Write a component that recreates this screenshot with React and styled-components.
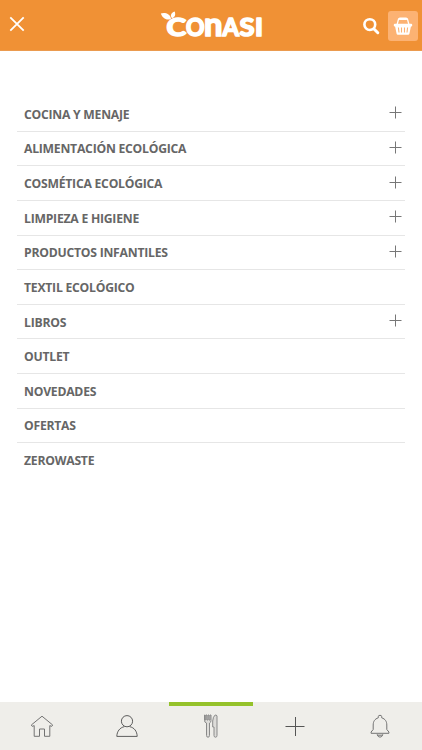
import React from 'react';
import styled, { createGlobalStyle } from 'styled-components';

const GlobalStyle = createGlobalStyle`
  body {
    margin: 0;
    background: #fff;
    font-family: 'Open Sans', 'Noto Sans', sans-serif;
  }
`;

const Page = styled.div`
  display: flex;
  flex-direction: column;
  height: 750px;
  overflow: hidden;
`;

const Header = styled.header`
  display: grid;
  grid-template-columns: 160px 104px 1fr;
  align-items: center;
  box-sizing: border-box;
  height: 51px;
  background: #f09135;
  border-bottom: 1px solid #eb9b4f;
`;

const IconButton = styled.button`
  display: flex;
  align-items: center;
  justify-content: center;
  width: ${(props) => props.$width || 30}px;
  height: 30px;
  padding: 0;
  border: none;
  border-radius: 3px;
  background: ${(props) => (props.$filled ? '#fcb273' : 'transparent')};
  cursor: pointer;
`;

const CloseButton = styled(IconButton)`
  margin: 0 0 2px 2px;
`;

const Actions = styled.div`
  display: flex;
  justify-content: flex-end;
  gap: 2px;
  padding: 1px 4px 0 0;
`;

const LogoText = styled.text`
  font-family: Lato, sans-serif;
  font-weight: 700;
  fill: #fff;
  stroke: #fff;
  stroke-width: 1.7;
  stroke-linejoin: round;
`;

const Menu = styled.ul`
  flex: 1;
  margin: 0;
  padding: 46px 17px 0;
  list-style: none;
`;

const MenuItem = styled.li`
  display: flex;
  align-items: center;
  justify-content: space-between;
  box-sizing: border-box;
  height: 34.64px;
  padding: 2px 3px 0 7px;
  border-bottom: 1px solid #e6e6e6;
  color: #666;
  font-size: 12.2px;
  font-weight: 700;
  letter-spacing: -0.24px;
  line-height: 18px;

  &:last-child {
    border-bottom: none;
    padding-top: 1px;
  }
`;

const PlusIcon = styled.svg`
  margin-bottom: 4px;
`;

const TabBar = styled.nav`
  display: grid;
  grid-template-columns: repeat(5, 1fr);
  height: 48px;
  background: #efeeea;
`;

const Tab = styled.a`
  display: flex;
  align-items: center;
  justify-content: center;
  box-sizing: border-box;
  padding-bottom: 5px;
  border-top: 4px solid ${(props) => (props.$active ? '#95c22b' : 'transparent')};
`;

const TabIcon = styled.svg`
  fill: ${(props) => props.$fill || 'none'};
  stroke: ${(props) => props.$color || '#737373'};
  stroke-width: 1;
  stroke-linejoin: round;
`;

const items = [
  { label: 'COCINA Y MENAJE', expandable: true },
  { label: 'ALIMENTACIÓN ECOLÓGICA', expandable: true },
  { label: 'COSMÉTICA ECOLÓGICA', expandable: true },
  { label: 'LIMPIEZA E HIGIENE', expandable: true },
  { label: 'PRODUCTOS INFANTILES', expandable: true },
  { label: 'TEXTIL ECOLÓGICO' },
  { label: 'LIBROS', expandable: true },
  { label: 'OUTLET' },
  { label: 'NOVEDADES' },
  { label: 'OFERTAS' },
  { label: 'ZEROWASTE' },
];

const letters = [
  { char: 'C', x: 6.5, width: 19.5, size: 24 },
  { char: 'O', x: 26, width: 18.5, size: 24 },
  { char: 'n', x: 44, width: 18.5, size: 32 },
  { char: 'A', x: 62.5, width: 16.5, size: 24 },
  { char: 'S', x: 79.5, width: 15, size: 24 },
  { char: 'I', x: 95, width: 8, size: 24 },
];

const Logo = () => (
  <svg width="104" height="50" viewBox="0 0 104 50">
    <path d="M0.8 13.5C4 12 10.5 13.2 11 19C6 20.8 2.5 18 0.8 13.5Z" fill="#fff" />
    <path d="M14.6 11.5C16 14.5 14.8 17.3 12 18.3C9.8 15.5 11 13 14.6 11.5Z" fill="#fff" />
    {letters.map(({ char, x, width, size }) => (
      <LogoText
        key={char}
        x={x}
        y="36"
        fontSize={size}
        textLength={width}
        lengthAdjust="spacingAndGlyphs"
      >
        {char}
      </LogoText>
    ))}
  </svg>
);

const App = () => (
  <>
    <GlobalStyle />
    <Page>
      <Header>
        <CloseButton aria-label="Cerrar">
          <svg width="16" height="16" viewBox="0 0 16 16" stroke="#fff" strokeWidth="1.8">
            <path d="M1.3 1.3L14.7 14.7M14.7 1.3L1.3 14.7" />
          </svg>
        </CloseButton>
        <Logo />
        <Actions>
          <IconButton $width={30} aria-label="Buscar">
            <svg width="18" height="18" viewBox="0 0 18 18" fill="none" stroke="#fff" strokeLinecap="round">
              <circle cx="7.8" cy="7.6" r="5.4" strokeWidth="2.6" />
              <path d="M12 12L15.8 15.7" strokeWidth="3" />
            </svg>
          </IconButton>
          <IconButton $filled aria-label="Cesta">
            <svg width="20" height="20" viewBox="0 0 20 20" fill="none" stroke="#fff">
              <path d="M4 9L5.6 2.8H14.4L16 9" strokeWidth="1.3" />
              <path d="M7 2.7H13" strokeWidth="2.4" strokeLinecap="round" />
              <rect x="0.8" y="7.7" width="18.4" height="2.8" rx="1" fill="#fff" stroke="none" />
              <path d="M2 10H18L16.4 17.7Q16.2 18.7 15.2 18.7H4.8Q3.8 18.7 3.6 17.7Z" fill="#fff" stroke="none" />
              <path d="M5.4 11.5L6 16.5M8.5 11.5V16.5M11.5 11.5V16.5M14.6 11.5L14 16.5" stroke="#fcb273" strokeWidth="1.1" />
            </svg>
          </IconButton>
        </Actions>
      </Header>

      <Menu>
        {items.map((item) => (
          <MenuItem key={item.label}>
            {item.label}
            {item.expandable && (
              <PlusIcon width="13" height="13" viewBox="0 0 13 13" stroke="#777">
                <path d="M0.5 6.5H12.5M6.5 0.5V12.5" />
              </PlusIcon>
            )}
          </MenuItem>
        ))}
      </Menu>

      <TabBar>
        <Tab aria-label="Inicio">
          <TabIcon width="24" height="24" viewBox="0 0 24 24">
            <path d="M12 2.2L1.3 11L2.3 12.4L4.2 11.6V22.3H9.5V15H14.5V22.3H19.8V11.6L21.7 12.4L22.7 11Z" />
          </TabIcon>
        </Tab>
        <Tab aria-label="Mi cuenta">
          <TabIcon width="24" height="24" viewBox="0 0 24 24" $color="#5d5d5d">
            <circle cx="12" cy="7.2" r="5.6" />
            <path d="M9.5 12.6C4.8 13.6 2 17.3 1.8 22.4H22.2C22 17.3 19.4 13.6 14.5 12.6" />
          </TabIcon>
        </Tab>
        <Tab $active aria-label="Recetas">
          <TabIcon width="16" height="24" viewBox="0 0 16 24" $color="#8a8a8a" $fill="#dddcd9">
            <path d="M1.5 1V6.5Q1.5 8.5 3.5 9V21.5Q3.5 23.2 5 23.2T6.5 21.5V9Q8 8.5 8 6.5V1H7V6H6V1H5V6H4V1H3V6H2.2V1Z" />
            <path d="M14 2V21.5Q14 23.2 12.5 23.2T11 21.5V13H9.7V7Q10 2.5 12.2 1Q13.3 0.5 14 2Z" />
          </TabIcon>
        </Tab>
        <Tab aria-label="Más">
          <TabIcon width="20" height="20" viewBox="0 0 20 20" $color="#555">
            <path d="M0.5 10.5H19.5M10.5 1V20" />
          </TabIcon>
        </Tab>
        <Tab aria-label="Avisos">
          <TabIcon width="22" height="26" viewBox="0 0 22 26">
            <path d="M9.3 4.8V3.6Q9.3 2.3 11 2.3T12.7 3.6V4.8C16.4 6 17.8 8.6 17.8 12V16.5L19.9 19V20.3H2.1V19L4.2 16.5V12C4.2 8.6 5.6 6 9.3 4.8Z" />
            <path d="M8.2 21.3C8.5 25 13.5 25 13.8 21.3M8.2 22.2H13.8" />
          </TabIcon>
        </Tab>
      </TabBar>
    </Page>
  </>
);

export default App;
